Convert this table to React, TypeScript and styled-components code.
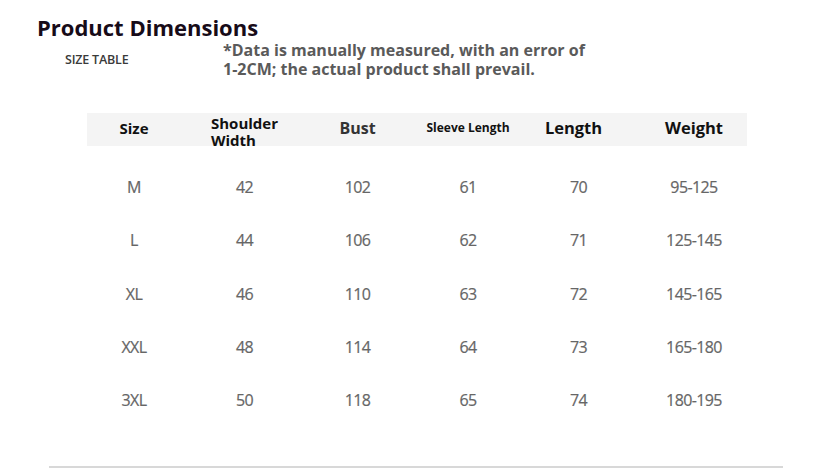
import React from "react";
import styled, { createGlobalStyle } from "styled-components";

const GlobalStyle = createGlobalStyle`
  html, body { margin: 0; padding: 0; background: #ffffff; }
  body { font-family: "Open Sans", "Liberation Sans", sans-serif; }
`;

const Page = styled.div`
  width: 824px;
  height: 471px;
  box-sizing: border-box;
  padding-top: 13px;
  display: flex;
  flex-direction: column;
  overflow: hidden;
`;

const Heading = styled.h1`
  margin: 0 0 0 37px;
  font-size: 22px;
  line-height: 28px;
  font-weight: 700;
  color: #170b18;
`;

const IntroRow = styled.div`
  display: flex;
  align-items: flex-start;
  padding-left: 65px;
`;

const SizeTableLabel = styled.div`
  width: 158px;
  margin-top: 11px;
  font-size: 12.5px;
  line-height: 16px;
  font-weight: 600;
  color: #3a3a3a;
  letter-spacing: -0.2px;
`;

const Note = styled.p`
  margin: 0;
  font-size: 16px;
  line-height: 19px;
  font-weight: 700;
  color: #5a5a5a;
`;

const NoteLine = styled.span`
  display: block;
  white-space: nowrap;
`;

const Table = styled.div`
  margin: 34px 0 0 80px;
  width: 673px;
  display: flex;
  flex-direction: column;
`;

const columns = "108px 113px 113px 108px 113px 118px";

const HeaderBand = styled.div`
  display: grid;
  grid-template-columns: ${columns};
  grid-template-rows: 29px;
  height: 33px;
  box-sizing: border-box;
  padding-bottom: 4px;
  align-items: center;
  background: linear-gradient(
    to right,
    transparent 7px,
    #f4f4f4 7px,
    #f4f4f4 667px,
    transparent 667px
  );
`;

const HeadCell = styled.div<{ $size: number; $color?: string; $drop?: number; $nudge?: number }>`
  display: flex;
  justify-content: center;
  font-weight: 700;
  font-size: ${(p) => p.$size}px;
  color: ${(p) => p.$color || "#111111"};
  white-space: nowrap;
  padding-top: ${(p) => p.$drop || 0}px;
  padding-right: ${(p) => p.$nudge || 0}px;
`;

const Stacked = styled.span`
  display: inline-block;
  text-align: left;
  line-height: 17px;
`;

const Rows = styled.div`
  margin-top: 14.5px;
  display: flex;
  flex-direction: column;
`;

const Row = styled.div`
  display: grid;
  grid-template-columns: ${columns};
  height: 53.3px;
  align-items: center;
`;

const Cell = styled.div`
  text-align: center;
  font-size: 16px;
  letter-spacing: -0.6px;
  color: #666666;
  -webkit-text-stroke: 0.2px #666666;
`;

const Divider = styled.div`
  margin: 39px 0 0 49px;
  width: 734px;
  height: 2px;
  background: #d8d8d8;
`;

const data = [
  ["M", "42", "102", "61", "70", "95-125"],
  ["L", "44", "106", "62", "71", "125-145"],
  ["XL", "46", "110", "63", "72", "145-165"],
  ["XXL", "48", "114", "64", "73", "165-180"],
  ["3XL", "50", "118", "65", "74", "180-195"],
];

export default function App() {
  return (
    <>
      <GlobalStyle />
      <Page>
        <Heading>Product Dimensions</Heading>
        <IntroRow>
          <SizeTableLabel>SIZE TABLE</SizeTableLabel>
          <Note>
            <NoteLine>*Data is manually measured, with an error of</NoteLine>
            <NoteLine>1-2CM; the actual product shall prevail.</NoteLine>
          </Note>
        </IntroRow>
        <Table>
          <HeaderBand>
            <HeadCell $size={15}>Size</HeadCell>
            <HeadCell $size={15} $drop={8}>
              <Stacked>
                Shoulder
                <br />
                Width
              </Stacked>
            </HeadCell>
            <HeadCell $size={16} $color="#333333">Bust</HeadCell>
            <HeadCell $size={12}>Sleeve Length</HeadCell>
            <HeadCell $size={16.5} $nudge={10}>Length</HeadCell>
            <HeadCell $size={16.5}>Weight</HeadCell>
          </HeaderBand>
          <Rows>
            {data.map((r) => (
              <Row key={r[0]}>
                {r.map((v, i) => (
                  <Cell key={i}>{v}</Cell>
                ))}
              </Row>
            ))}
          </Rows>
        </Table>
        <Divider />
      </Page>
    </>
  );
}
